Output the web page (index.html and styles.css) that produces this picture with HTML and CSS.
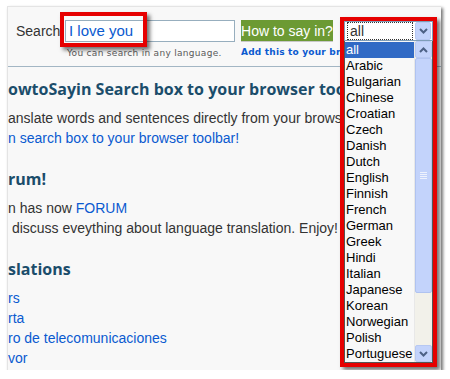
FILE: index.html
```html
<!DOCTYPE html>
<html lang="en">
<head>
    <meta charset="UTF-8">
    <title>HowtoSayin - Search</title>
    <link rel="stylesheet" href="styles.css">
</head>
<body>
    <div class="shot">
        <div class="topbar">
            <span class="search-label">Search:</span>
            <div class="field-col">
                <div class="search-box">I love you</div>
                <div class="hint">You can search in any language.</div>
            </div>
            <div class="btn-col">
                <div class="say-btn">How to say in?</div>
                <a class="add-link" href="#">Add this to your browser toolbar</a>
            </div>
        </div>

        <div class="content">
            <div class="section">
                <h2>owtoSayin Search box to your browser toolbar</h2>
                <p>anslate words and sentences directly from your browser</p>
                <p><a href="#">n search box to your browser toolbar!</a></p>
            </div>
            <div class="section">
                <h2>rum!</h2>
                <p>n has now <a href="#">FORUM</a></p>
                <p>&nbsp;discuss eveything about language translation. Enjoy!</p>
            </div>
            <div class="section">
                <h2>slations</h2>
                <p><a href="#">rs</a></p>
                <p><a href="#">rta</a></p>
                <p><a href="#">ro de telecomunicaciones</a></p>
                <p><a href="#">vor</a></p>
            </div>
        </div>

        <!-- red annotation boxes drawn over the page -->
        <div class="mark mark-input"></div>

        <div class="mark mark-select">
            <div class="select">
                <span class="select-value">all</span>
                <span class="select-arrow">
                    <svg width="9" height="6" viewBox="0 0 9 6"><path d="M1 1 L4.5 4.5 L8 1" fill="none" stroke="#4d6185" stroke-width="2"/></svg>
                </span>
            </div>
            <div class="listbox">
                <ul class="options">
                    <li class="selected">all</li>
                    <li>Arabic</li>
                    <li>Bulgarian</li>
                    <li>Chinese</li>
                    <li>Croatian</li>
                    <li>Czech</li>
                    <li>Danish</li>
                    <li>Dutch</li>
                    <li>English</li>
                    <li>Finnish</li>
                    <li>French</li>
                    <li>German</li>
                    <li>Greek</li>
                    <li>Hindi</li>
                    <li>Italian</li>
                    <li>Japanese</li>
                    <li>Korean</li>
                    <li>Norwegian</li>
                    <li>Polish</li>
                    <li>Portuguese</li>
                </ul>
                <div class="scrollbar">
                    <div class="sb-btn">
                        <svg width="9" height="6" viewBox="0 0 9 6"><path d="M1 5 L4.5 1.5 L8 5" fill="none" stroke="#4d6185" stroke-width="2"/></svg>
                    </div>
                    <div class="sb-thumb"><span class="grip"></span></div>
                    <div class="sb-track"></div>
                    <div class="sb-btn">
                        <svg width="9" height="6" viewBox="0 0 9 6"><path d="M1 1 L4.5 4.5 L8 1" fill="none" stroke="#4d6185" stroke-width="2"/></svg>
                    </div>
                </div>
            </div>
        </div>
    </div>
</body>
</html>
```

FILE: styles.css
```css
body {
    margin: 0;
    padding: 6px 0 0 7px;
    background-color: #ffffff;
    font-family: 'Liberation Sans', Arial, sans-serif;
    color: #333;
}
.shot {
    position: relative;
    width: 433px;
    height: 363px;
    overflow: hidden;
    background-color: #f8f8f8;
    border-top: 1px solid #e4e4e4;
    border-left: 1px solid #e4e4e4;
    box-shadow: 2px 2px 3px rgba(0,0,0,0.55);
}
.topbar {
    display: flex;
    align-items: flex-start;
    height: 60px;
    padding-top: 13px;
    box-sizing: border-box;
    border-bottom: 1px solid #a3b6c4;
}
.search-label {
    flex: none;
    font-size: 14px;
    color: #333;
    margin-left: 8px;
    line-height: 22px;
    width: 49px;
}
.field-col {
    flex: none;
    width: 170px;
}
.search-box {
    height: 22px;
    box-sizing: border-box;
    border: 1px solid #97aebe;
    background-color: #fff;
    font-size: 15px;
    line-height: 20px;
    padding-left: 3px;
    color: #0a5ad0;
}
.hint {
    font-family: 'DejaVu Sans', Verdana, sans-serif;
    font-size: 9px;
    letter-spacing: 0.3px;
    color: #5a5a5a;
    margin: 6px 0 0 2px;
    white-space: nowrap;
}
.btn-col {
    flex: none;
    width: 99px;
    margin-left: 6px;
    white-space: nowrap;
    overflow: hidden;
}
.say-btn {
    width: 92px;
    height: 22px;
    background-color: #6c9a33;
    color: #fff;
    font-size: 14px;
    line-height: 22px;
    text-align: center;
    border-bottom: 1px solid #c8c8c8;
    box-sizing: border-box;
}
.add-link {
    display: block;
    margin-top: 5px;
    font-family: 'DejaVu Sans', Verdana, sans-serif;
    font-size: 9px;
    font-weight: bold;
    letter-spacing: 0.2px;
    color: #0a5ad0;
    text-decoration: none;
}
.content {
    width: 332px;
    overflow: hidden;
    padding-top: 11px;
    white-space: nowrap;
}
.section {
    margin-bottom: 20px;
}
.section h2 {
    font-family: 'Open Sans', sans-serif;
    font-size: 16px;
    font-weight: bold;
    color: #1b4d6b;
    margin: 0 0 8px 0;
    line-height: 22px;
}
.section p {
    margin: 0;
    font-size: 14px;
    line-height: 20px;
    color: #333;
}
.section a {
    color: #0a5ad0;
    text-decoration: none;
}
.mark {
    position: absolute;
    border: 4px solid #e60000;
    box-shadow: 3px 3px 4px rgba(0,0,0,0.55);
}
.mark-input {
    left: 52px;
    top: 5px;
    width: 79px;
    height: 27px;
}
.mark-select {
    left: 332px;
    top: 10px;
    width: 89px;
    height: 342px;
    background-color: #fff;
    display: flex;
    flex-direction: column;
}
.select {
    display: flex;
    align-items: center;
    height: 22px;
    box-sizing: border-box;
    border: 1px solid #7f9db9;
    background-color: #fff;
}
.select-value {
    flex: 1;
    font-size: 14px;
    line-height: 16px;
    margin: 0 2px;
    padding-left: 2px;
    border: 1px dotted #333;
}
.select-arrow,
.sb-btn {
    width: 16px;
    height: 16px;
    display: flex;
    align-items: center;
    justify-content: center;
    box-sizing: border-box;
    background-color: #c3d3fb;
    border: 1px solid #b7c8f2;
    border-radius: 2px;
}
.select-arrow {
    height: 18px;
    margin-right: 1px;
}
.listbox {
    flex: 1;
    display: flex;
    border: 1px solid #555;
    border-top: none;
    box-sizing: border-box;
    background-color: #f8f8f8;
}
.options {
    flex: 1;
    list-style: none;
    margin: 0;
    padding: 1px 0 0 0;
}
.options li {
    font-size: 13px;
    line-height: 16px;
    height: 16px;
    padding-left: 1px;
    color: #000;
}
.options li.selected {
    background-color: #316ac5;
    color: #fff;
}
.scrollbar {
    width: 17px;
    display: flex;
    flex-direction: column;
    background-color: #f2f1ea;
    border-left: 1px solid #e8e8e8;
}
.sb-btn {
    width: 17px;
    height: 17px;
}
.sb-thumb {
    height: 235px;
    background-color: #c3d3fb;
    border: 1px solid #b0c3f0;
    border-radius: 2px;
    box-sizing: border-box;
    display: flex;
    align-items: center;
    justify-content: center;
}
.grip {
    width: 7px;
    height: 7px;
    background: repeating-linear-gradient(#eef2fd 0 1px, transparent 1px 2px);
}
.sb-track {
    flex: 1;
}
```
